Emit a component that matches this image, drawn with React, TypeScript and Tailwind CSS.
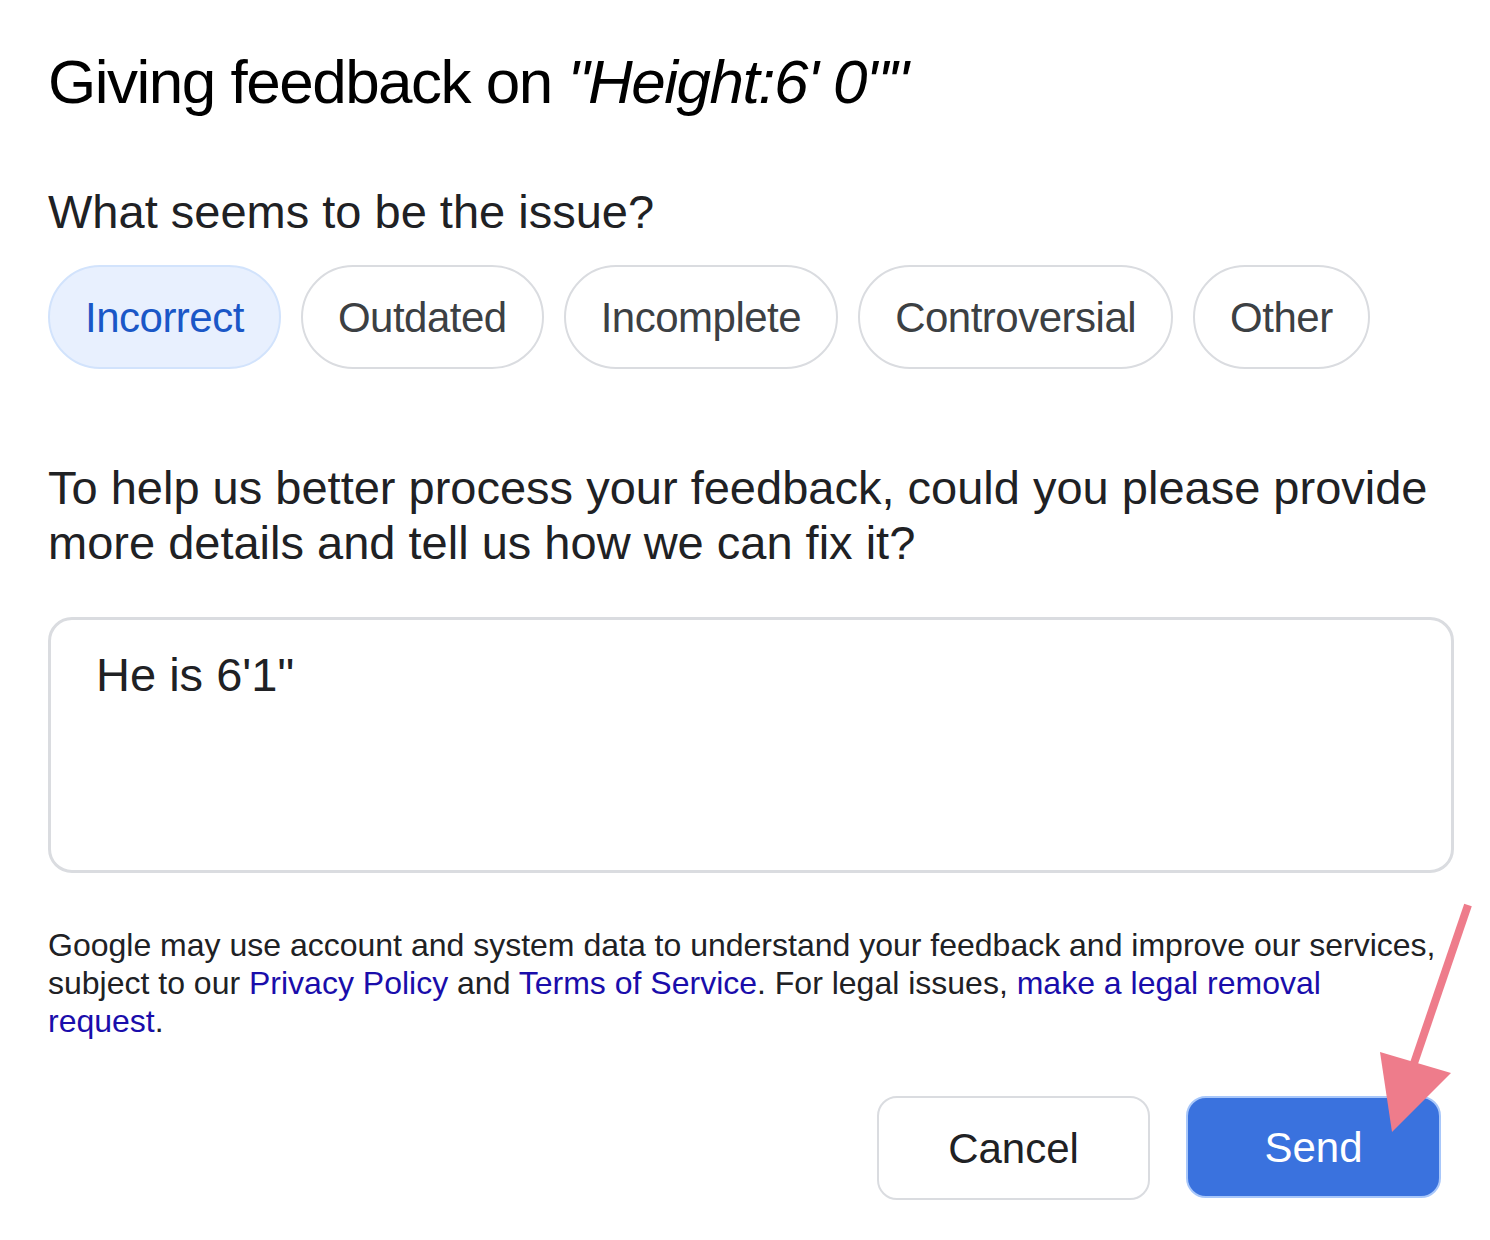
import React from 'react';

const chips = ['Incorrect', 'Outdated', 'Incomplete', 'Controversial', 'Other'];

const App = () => {
  return (
    <div className="relative w-[1490px] h-[1240px] bg-white overflow-hidden font-['Liberation_Sans',Arial,sans-serif] text-[#202124]">
      <div className="pl-[48px] pr-[36px] pt-[42px]">
        {/* Title */}
        <h1 className="text-[62px] leading-[80px] text-black tracking-[-1.5px]">
          Giving feedback on <span className="italic">"Height:6' 0""</span>
        </h1>

        {/* Issue chips */}
        <p className="mt-[62px] text-[47px] leading-[56px]">What seems to be the issue?</p>
        <div className="mt-[25px] flex gap-[20px]">
          {chips.map((c, i) => (
            <button
              key={c}
              className={
                i === 0
                  ? 'h-[104px] px-[35px] rounded-full border-2 border-[#d2e3fc] bg-[#e8f0fe] text-[#1a57c7] text-[42px] tracking-[-0.5px]'
                  : 'h-[104px] px-[35px] rounded-full border-2 border-[#dadce0] bg-white text-[#3c4043] text-[42px] tracking-[-0.5px]'
              }
            >
              {c}
            </button>
          ))}
        </div>

        {/* Details */}
        <p className="mt-[91px] text-[47px] leading-[55px] w-[1410px]">
          To help us better process your feedback, could you please provide more details and tell us how we can fix it?
        </p>
        <div className="mt-[47px] w-[1406px] h-[256px] rounded-[24px] border-[3px] border-[#dadce0] px-[45px] pt-[25px]">
          <span className="text-[47px] leading-[60px] text-[#202124]">He is 6'1"</span>
        </div>

        {/* Legal */}
        <p className="mt-[53px] text-[32px] leading-[38px] text-[#202124] w-[1392px]">
          Google may use account and system data to understand your feedback and improve our services, subject to our{' '}
          <a className="text-[#1a0dab]">Privacy Policy</a> and <a className="text-[#1a0dab]">Terms of Service</a>. For
          legal issues, <a className="text-[#1a0dab]">make a legal removal request</a>.
        </p>

        {/* Actions */}
        <div className="mt-[56px] flex justify-end gap-[36px] pr-[13px]">
          <button className="w-[273px] h-[104px] rounded-[20px] border-2 border-[#dadce0] bg-white text-[42px] text-[#202124]">
            Cancel
          </button>
          <button className="w-[255px] h-[102px] rounded-[20px] border-2 border-[#a8c7fa] bg-[#3a72de] text-[42px] text-white">
            Send
          </button>
        </div>
      </div>

      {/* Annotation arrow */}
      <svg className="absolute left-0 top-0 pointer-events-none" width="1490" height="1240">
        <line x1="1468" y1="905" x2="1410" y2="1075" stroke="#ee7c8b" strokeWidth="8" />
        <polygon points="1380,1052 1451,1073 1392,1132" fill="#ee7c8b" />
      </svg>
    </div>
  );
};

export default App;
